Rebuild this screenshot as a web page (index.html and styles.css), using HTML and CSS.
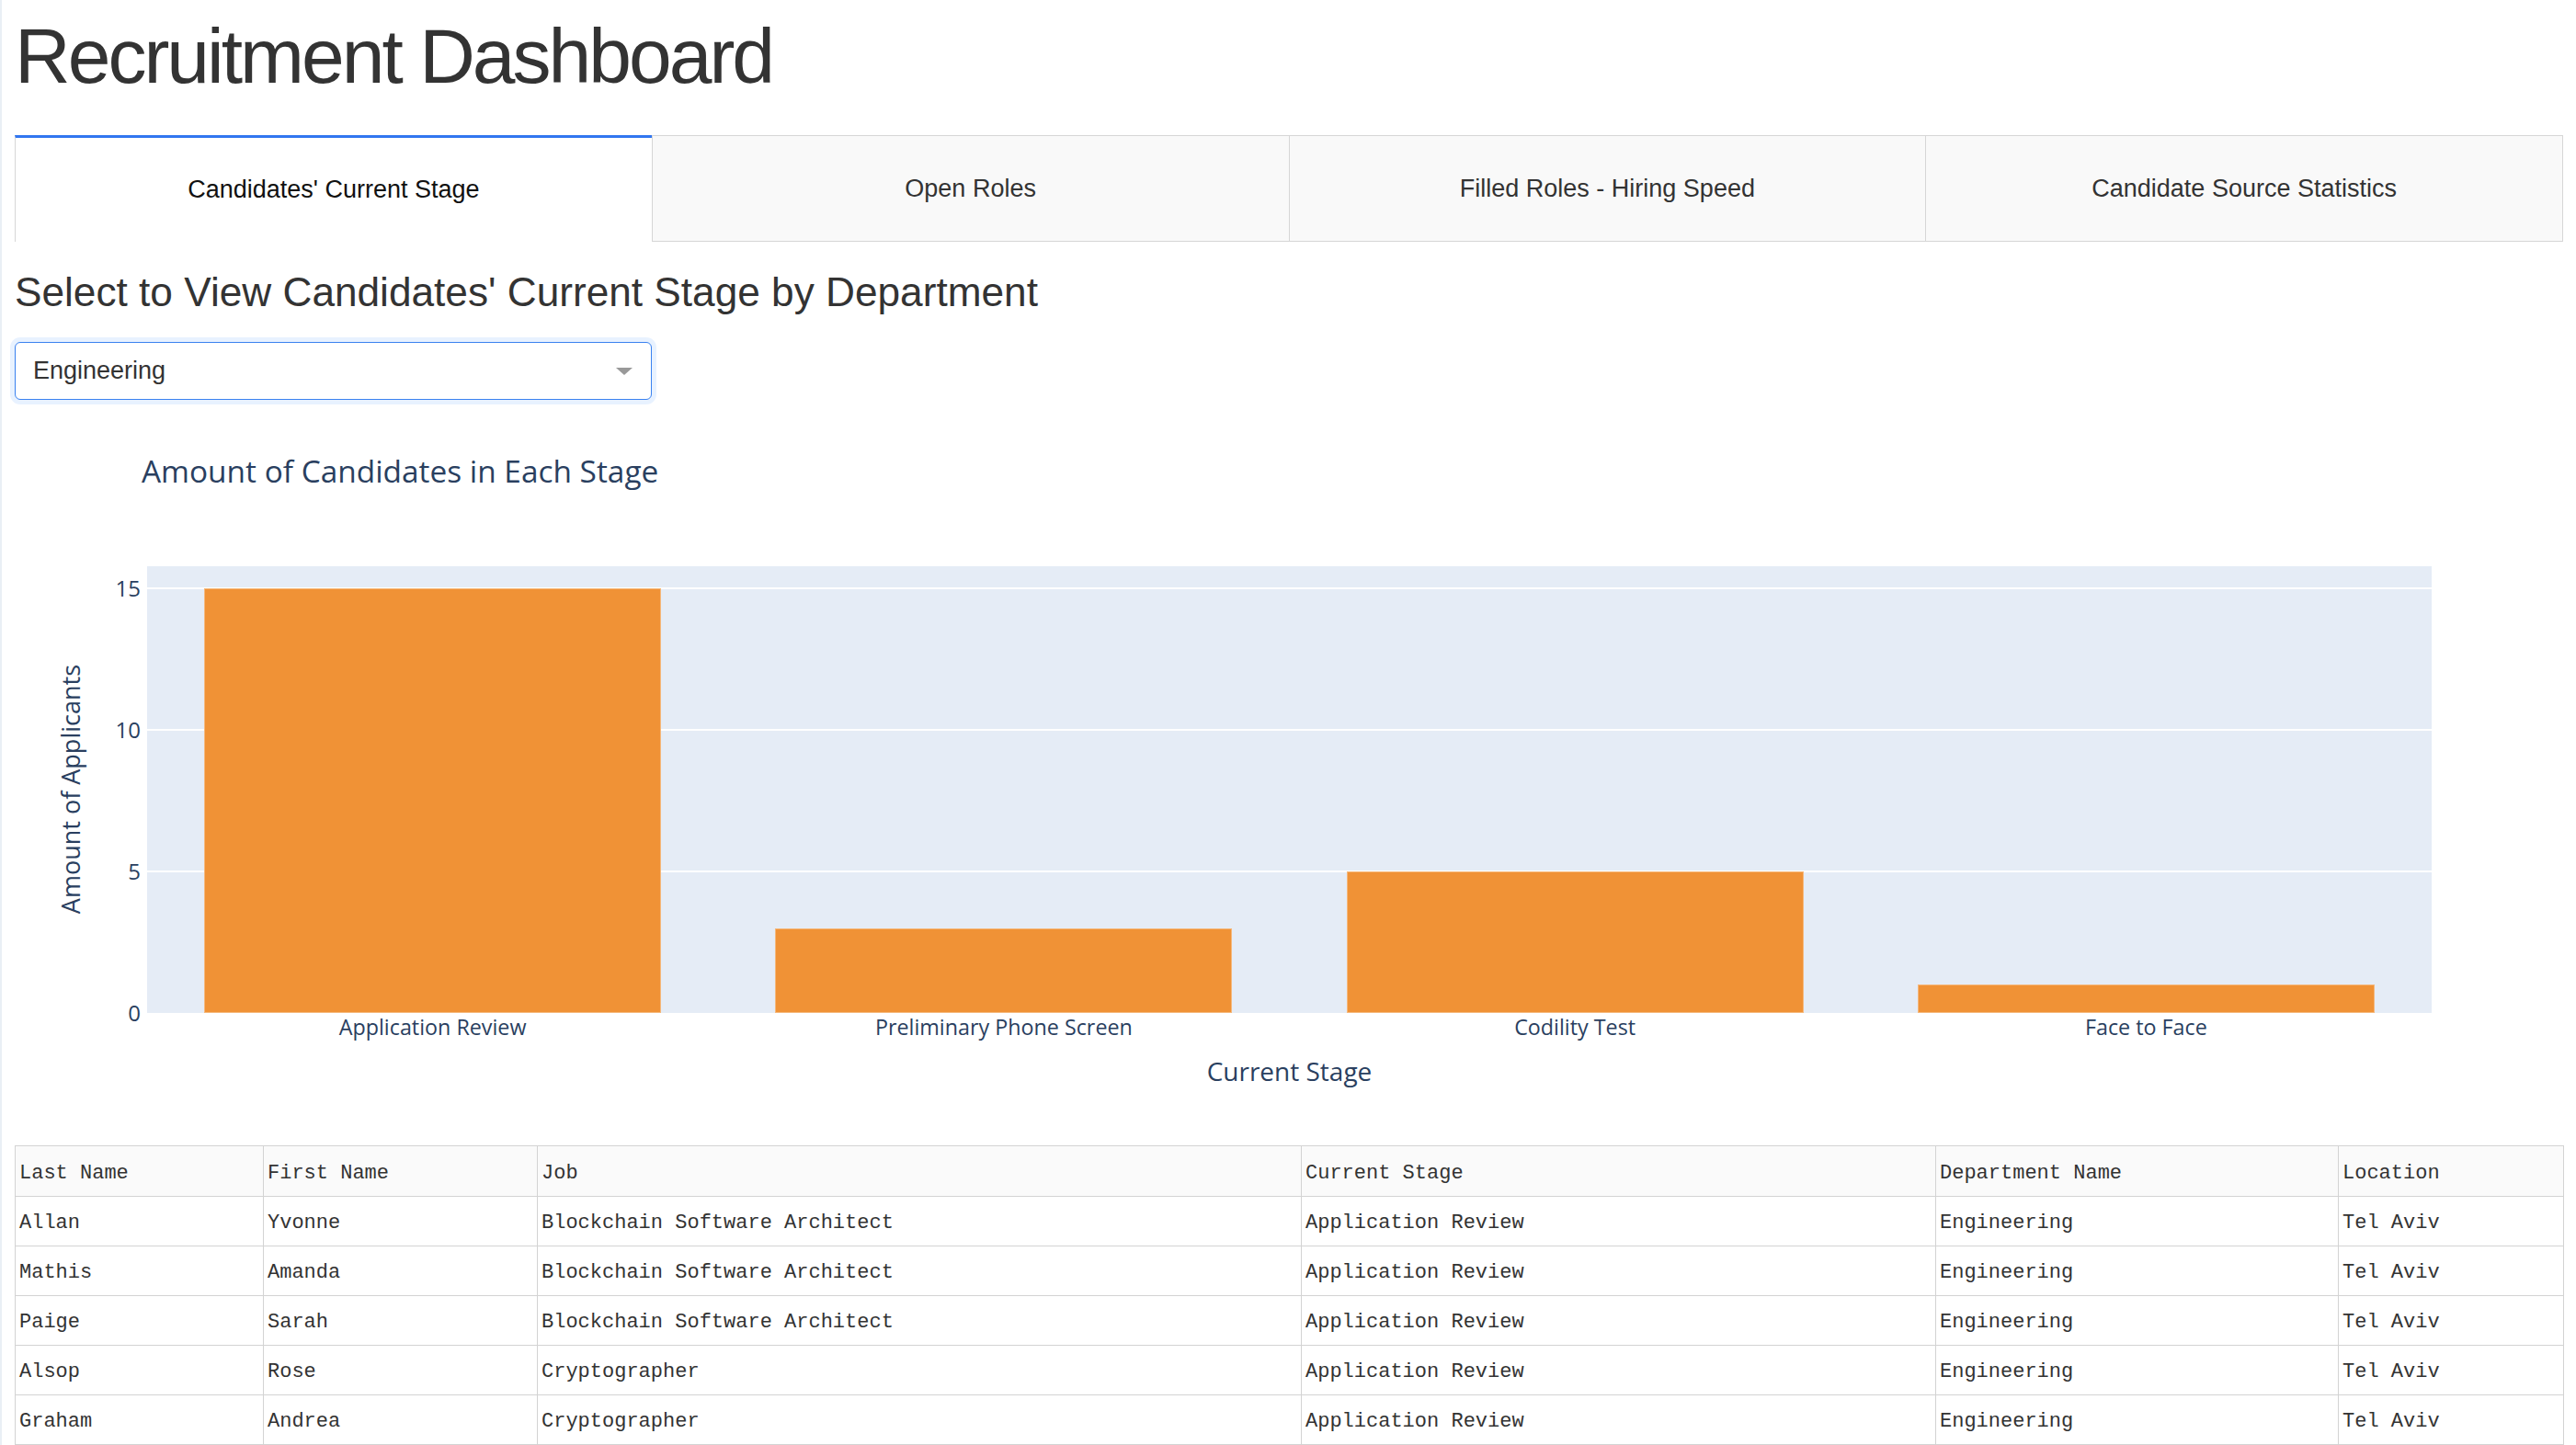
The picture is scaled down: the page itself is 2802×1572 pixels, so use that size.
FILE: index.html
```html
<!DOCTYPE html>
<html lang="en">
<head>
<meta charset="utf-8">
<title>Recruitment Dashboard</title>
<link rel="stylesheet" href="styles.css">
</head>
<body>
<div class="app">
  <h1 class="page-title">Recruitment Dashboard</h1>
  <div class="tabs">
    <div class="tab tab--selected">Candidates' Current Stage</div>
    <div class="tab">Open Roles</div>
    <div class="tab">Filled Roles - Hiring Speed</div>
    <div class="tab">Candidate Source Statistics</div>
  </div>
  <div class="tab-content">
    <h4 class="section-title">Select to View Candidates' Current Stage by Department</h4>
    <div class="dropdown">
      <span class="dropdown-value">Engineering</span>
      <span class="dropdown-arrow"></span>
    </div>
    <div class="chart">
      <div class="chart-title">Amount of Candidates in Each Stage</div>
      <div class="chart-grid">
        <div class="y-title"><span>Amount of Applicants</span></div>
        <div class="y-ticks">
          <span class="y-tick" style="bottom:0%">0</span>
          <span class="y-tick" style="bottom:31.667%">5</span>
          <span class="y-tick" style="bottom:63.333%">10</span>
          <span class="y-tick" style="bottom:95%">15</span>
        </div>
        <div class="plot">
          <div class="gridline" style="bottom:31.667%"></div>
          <div class="gridline" style="bottom:63.333%"></div>
          <div class="gridline" style="bottom:95%"></div>
          <div class="bars">
            <div class="bar-slot"><div class="bar" style="height:95%"></div></div>
            <div class="bar-slot"><div class="bar" style="height:19%"></div></div>
            <div class="bar-slot"><div class="bar" style="height:31.667%"></div></div>
            <div class="bar-slot"><div class="bar" style="height:6.333%"></div></div>
          </div>
        </div>
        <div class="x-ticks">
          <span>Application Review</span>
          <span>Preliminary Phone Screen</span>
          <span>Codility Test</span>
          <span>Face to Face</span>
        </div>
        <div class="x-title">Current Stage</div>
      </div>
    </div>
    <table class="data-table">
      <colgroup>
        <col class="c1"><col class="c2"><col class="c3"><col class="c4"><col class="c5"><col class="c6">
      </colgroup>
      <thead>
        <tr><th>Last Name</th><th>First Name</th><th>Job</th><th>Current Stage</th><th>Department Name</th><th>Location</th></tr>
      </thead>
      <tbody>
        <tr><td>Allan</td><td>Yvonne</td><td>Blockchain Software Architect</td><td>Application Review</td><td>Engineering</td><td>Tel Aviv</td></tr>
        <tr><td>Mathis</td><td>Amanda</td><td>Blockchain Software Architect</td><td>Application Review</td><td>Engineering</td><td>Tel Aviv</td></tr>
        <tr><td>Paige</td><td>Sarah</td><td>Blockchain Software Architect</td><td>Application Review</td><td>Engineering</td><td>Tel Aviv</td></tr>
        <tr><td>Alsop</td><td>Rose</td><td>Cryptographer</td><td>Application Review</td><td>Engineering</td><td>Tel Aviv</td></tr>
        <tr><td>Graham</td><td>Andrea</td><td>Cryptographer</td><td>Application Review</td><td>Engineering</td><td>Tel Aviv</td></tr>
      </tbody>
    </table>
  </div>
</div>
</body>
</html>
```
FILE: styles.css
```css
html, body {
  margin: 0;
  padding: 0;
  background: #ffffff;
}

body {
  border-left: 2px solid #e9eff5;
  font-family: "Liberation Sans", Arial, Helvetica, sans-serif;
  color: #333333;
  min-height: 1572px;
  box-sizing: border-box;
}

.app {
  padding: 0 14px 0 14px;
}

.page-title {
  margin: 11px 0 36px 0;
  font-size: 84px;
  font-weight: 400;
  line-height: 100px;
  letter-spacing: -3px;
  color: #333333;
}

/* Tabs */
.tabs {
  display: flex;
  height: 116px;
}

.tab {
  flex: 1;
  display: flex;
  align-items: center;
  justify-content: center;
  background: #f9f9f9;
  border-top: 1px solid #d6d6d6;
  border-bottom: 1px solid #d6d6d6;
  border-left: 1px solid #d6d6d6;
  font-size: 27px;
  color: #333333;
}

.tab:last-child {
  border-right: 1px solid #d6d6d6;
}

.tab--selected {
  background: #ffffff;
  border-top: 3px solid #3176f0;
  border-bottom: none;
  color: #111111;
}

/* Section */
.section-title {
  margin: 25px 0 24px 0;
  font-size: 44.2px;
  font-weight: 400;
  line-height: 60px;
  color: #333333;
}

.dropdown {
  width: 693px;
  height: 63px;
  box-sizing: border-box;
  border: 1px solid #3a82f0;
  border-radius: 6px;
  box-shadow: 0 0 0 5px rgba(0, 110, 255, 0.09);
  display: flex;
  align-items: center;
  justify-content: space-between;
  padding: 0 20px 0 19px;
  background: #ffffff;
}

.dropdown-value {
  font-size: 27px;
  color: #333333;
}

.dropdown-arrow {
  width: 0;
  height: 0;
  border-left: 9px solid transparent;
  border-right: 9px solid transparent;
  border-top: 8px solid #999999;
}

/* Chart */
.chart {
  margin-top: 55px;
  font-family: "Open Sans", Verdana, Arial, sans-serif;
  color: #2a3f5f;
}

.chart-title {
  font-size: 33.4px;
  line-height: 44px;
  padding-left: 138px;
  margin-bottom: 82px;
}

.chart-grid {
  display: grid;
  grid-template-columns: 122px 22px 1fr;
  grid-template-rows: 486px auto auto;
  padding-right: 143px;
}

.y-title {
  grid-column: 1;
  grid-row: 1;
  display: flex;
  align-items: center;
  justify-content: center;
}

.y-title span {
  writing-mode: vertical-rl;
  transform: rotate(180deg);
  font-size: 27px;
  line-height: 38px;
  white-space: nowrap;
}

.y-ticks {
  grid-column: 2;
  grid-row: 1;
  position: relative;
}

.y-tick {
  position: absolute;
  right: 7px;
  transform: translateY(50%);
  font-size: 24px;
  line-height: 24px;
  white-space: nowrap;
}

.plot {
  grid-column: 3;
  grid-row: 1;
  position: relative;
  background: #e5ecf6;
  display: flex;
}

.gridline {
  position: absolute;
  left: 0;
  right: 0;
  height: 2px;
  background: #ffffff;
  transform: translateY(50%);
}

.bars {
  flex: 1;
  display: flex;
  position: relative;
  z-index: 1;
}

.bar-slot {
  flex: 1;
  display: flex;
  align-items: flex-end;
  justify-content: center;
}

.bar {
  width: 80%;
  background: #f09236;
  box-shadow: inset 0 0 0 1px rgba(255, 255, 255, 0.35);
}

.x-ticks {
  grid-column: 3;
  grid-row: 2;
  display: flex;
}

.x-ticks span {
  flex: 1;
  text-align: center;
  font-size: 23.3px;
  line-height: 30px;
  white-space: nowrap;
}

.x-title {
  grid-column: 3;
  grid-row: 3;
  margin-top: 14px;
  text-align: center;
  font-size: 28px;
  line-height: 38px;
}

/* Table */
.data-table {
  margin-top: 62px;
  width: 100%;
  table-layout: fixed;
  border-collapse: collapse;
  font-family: "Liberation Mono", "Courier New", monospace;
  font-size: 22px;
  color: #333333;
}

.c1 { width: 270px; }
.c2 { width: 298px; }
.c3 { width: 831px; }
.c4 { width: 690px; }
.c5 { width: 438px; }
.c6 { width: 245px; }

.data-table th,
.data-table td {
  border: 1px solid #d3d3d3;
  height: 54px;
  box-sizing: border-box;
  padding: 4px 4px 0 4px;
  text-align: left;
  vertical-align: middle;
  white-space: nowrap;
  overflow: hidden;
  font-weight: 400;
}

.data-table th {
  background: #fafafa;
  height: 55px;
}
```
